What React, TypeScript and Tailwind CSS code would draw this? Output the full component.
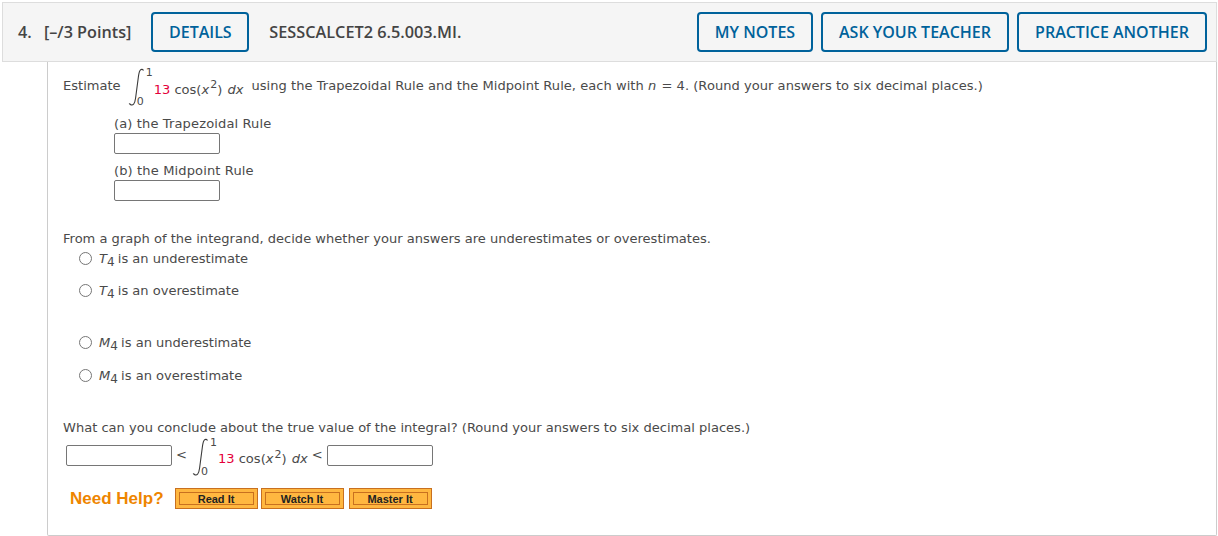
const body = "font-['DejaVu_Sans',sans-serif] text-[13.06px] text-[#4a4a4a]";

function HeaderButton({ label, width }: { label: string; width: string }) {
  return (
    <button className={`${width} h-[40px] rounded-[4px] border-2 border-[#00629b] bg-transparent text-center text-[16px] font-semibold text-[#00629b]`}>
      {label}
    </button>
  );
}

function TextBox() {
  return <input type="text" className="block h-[21px] w-[106px] shrink-0 rounded-[2px] border border-[#767676] bg-white" />;
}

function IntegralSign() {
  return (
    <span className="relative inline-block h-[40px] w-[26px] shrink-0">
      <svg width="20" height="40" viewBox="0 0 20 40" className="absolute left-0 top-0">
        <path
          d="M15.500 3.500c-.7-1.200-2-1.500-3-.6-1.200 1.100-1.600 3.200-2 6.100L7.600 31c-.4 3-.9 5-2 6.200-1 1-2.500 1-3.200.1-.3-.4-.8-.6-1.400-.3"
          fill="none"
          stroke="#3a3a3a"
          strokeWidth="1.100"
        />
      </svg>
      <span className="absolute left-[18px] top-[-2px] text-[11px] text-[#4a4a4a]">1</span>
      <span className="absolute left-[9px] top-[27px] text-[11px] text-[#4a4a4a]">0</span>
    </span>
  );
}

function Integrand({ className }: { className: string }) {
  return (
    <span className={`whitespace-nowrap ${className}`}>
      <span className="text-[#e4003a]">13</span> cos(<i className="pr-[1px]">x</i>
      <sup className="text-[11px]">2</sup>) <i className="pl-[1px] pr-[1px]">dx</i>
    </span>
  );
}

function Choice({ name, sub, text, className }: { name: string; sub: string; text: string; className: string }) {
  return (
    <div className={`flex h-[18px] items-center ${className}`}>
      <span className="mr-[7px] -mt-[2px] box-border size-[13px] rounded-full border border-[#767676] bg-white" />
      <span className="whitespace-nowrap">
        <i>{name}</i>
        <sub className="-mr-[1px] text-[12px]">{sub}</sub> {text}
      </span>
    </div>
  );
}

function HelpButton({ label, width }: { label: string; width: string }) {
  return (
    <button className={`${width} h-[21px] border border-[#c8701f] bg-[#ffb740] p-[3px] font-['Liberation_Sans',sans-serif] text-[11px] font-bold text-[#222]`}>
      <span className="flex h-full items-center justify-center border border-[#c8701f]">{label}</span>
    </button>
  );
}

export default function App() {
  return (
    <div className="h-[536px] w-[1218px] overflow-hidden bg-white pt-[2px]">
      <div className="ml-[2px] flex h-[60px] w-[1215px] items-center border border-[#dddddd] bg-[#f5f5f5] font-['Open_Sans',sans-serif] text-[#444]">
        <span className="ml-[15px] whitespace-nowrap text-[16.2px] font-semibold">
          4.&nbsp;<span className="ml-[8px]">[–/3 Points]</span>
        </span>
        <div className="ml-[20px]">
          <HeaderButton label="DETAILS" width="w-[98px]" />
        </div>
        <span className="ml-[20px] whitespace-nowrap text-[16.25px] font-semibold">SESSCALCET2 6.5.003.MI.</span>
        <div className="ml-auto mr-[9px] flex gap-[8px]">
          <HeaderButton label="MY NOTES" width="w-[116px]" />
          <HeaderButton label="ASK YOUR TEACHER" width="w-[188px]" />
          <HeaderButton label="PRACTICE ANOTHER" width="w-[190px]" />
        </div>
      </div>

      <div className={`${body} ml-[47px] h-[474px] w-[1170px] rounded-b-[2px] border-x border-b border-[#cccccc] pl-[15px]`}>
        <div className="flex h-[48px] items-center whitespace-nowrap pb-[1px]">
          <span>Estimate</span>
          <span className="ml-[7px] mt-[2px] flex items-center">
            <IntegralSign />
          </span>
          <Integrand className="mt-[8px]" />
          <span className="ml-[7px] tracking-[0.03px]">
            using the Trapezoidal Rule and the Midpoint Rule, each with <i className="pr-[1px]">n</i> = 4. (Round your answers to six decimal places.)
          </span>
        </div>

        <div className="ml-[51px] mt-[5px] tracking-[0.12px]">
          <div className="h-[18px] leading-[18px]">(a) the Trapezoidal Rule</div>
          <TextBox />
          <div className="mt-[8px] h-[18px] leading-[18px]">(b) the Midpoint Rule</div>
          <TextBox />
        </div>

        <div className="mt-[29px] h-[18px] leading-[18px]">From a graph of the integrand, decide whether your answers are underestimates or overestimates.</div>
        <div className="ml-[16px]">
          <Choice name="T" sub="4" text="is an underestimate" className="mt-[2px]" />
          <Choice name="T" sub="4" text="is an overestimate" className="mt-[14px]" />
          <Choice name="M" sub="4" text="is an underestimate" className="mt-[34px]" />
          <Choice name="M" sub="4" text="is an overestimate" className="mt-[15px]" />
        </div>

        <div className="mt-[34px] h-[18px] leading-[18px]">What can you conclude about the true value of the integral? (Round your answers to six decimal places.)</div>
        <div className="ml-[3px] flex h-[36px] items-center whitespace-nowrap">
          <TextBox />
          <span className="ml-[4px] mr-[5px]">&lt;</span>
          <span className="mt-[4px] flex">
            <IntegralSign />
          </span>
          <Integrand className="mt-[8px]" />
          <span className="ml-[3px] mr-[4px]">&lt;</span>
          <TextBox />
        </div>

        <div className="ml-[7px] mt-[13px] flex items-center">
          <span className="mr-[11px] font-['Liberation_Sans',sans-serif] text-[17px] font-bold text-[#ee8500]">Need Help?</span>
          <HelpButton label="Read It" width="w-[83px]" />
          <HelpButton label="Watch It" width="w-[83px] ml-[3px]" />
          <HelpButton label="Master It" width="w-[83px] ml-[5px]" />
        </div>
      </div>
    </div>
  );
}
